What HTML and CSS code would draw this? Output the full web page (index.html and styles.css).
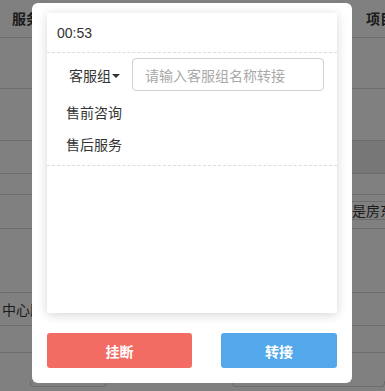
FILE: index.html
```html
<!DOCTYPE html>
<html lang="zh-CN">
<head>
<meta charset="utf-8">
<title>转接</title>
<link rel="stylesheet" href="styles.css">
</head>
<body>
<div class="page">
  <div class="bg">
    <div class="row r1"><span class="th">服务类型</span><span class="th th-right">项目</span></div>
    <div class="row r2"></div>
    <div class="row r3"></div>
    <div class="row r4"><span class="dark-cell"></span></div>
    <div class="row r5"></div>
    <div class="row r6"><span class="tag">是房东</span></div>
    <div class="row r7"></div>
    <div class="row r8"><span class="td">中心服务</span></div>
    <div class="row r9"></div>
    <div class="row r10"><span class="box box-left"></span><span class="box box-right"></span></div>
  </div>

  <div class="modal">
    <div class="card">
      <div class="card-head">00:53</div>
      <div class="search-row">
        <div class="group-select">客服组<span class="caret"></span></div>
        <input class="search-input" type="text" placeholder="请输入客服组名称转接">
      </div>
      <ul class="group-list">
        <li>售前咨询</li>
        <li>售后服务</li>
      </ul>
      <div class="card-body"></div>
    </div>
    <div class="actions">
      <button class="btn btn-hangup">挂断</button>
      <button class="btn btn-transfer">转接</button>
    </div>
  </div>
</div>
</body>
</html>
```
FILE: styles.css
```css
* { box-sizing: border-box; }
html, body { margin: 0; padding: 0; }
body {
  width: 385px;
  height: 391px;
  overflow: hidden;
  font-family: "Noto Sans CJK SC", "Liberation Sans", sans-serif;
  background: #808080;
}
.page {
  position: relative;
  width: 385px;
  height: 391px;
  overflow: hidden;
  background: #808080;
}
.bg {
  display: flex;
  flex-direction: column;
}
.row {
  display: flex;
  align-items: center;
  border-bottom: 1px solid #6c6c6c;
  flex-shrink: 0;
}
.r1 { height: 38px; justify-content: space-between; padding: 0 0 2px 12px; }
.r2 { height: 51px; }
.r3 { height: 52px; }
.r4 { height: 33px; justify-content: flex-end; }
.r5 { height: 21px; }
.r6 { height: 34px; justify-content: flex-end; align-items: flex-start; padding-top: 6px; }
.r7 { height: 64px; }
.r8 { height: 33px; padding-left: 2px; }
.r9 { height: 27px; }
.r10 { height: 33px; border-bottom: none; align-items: flex-end; }
.th {
  font-size: 14px;
  font-weight: bold;
  color: #1a1a1a;
}
.th-right { width: 19px; overflow: hidden; white-space: nowrap; }
.dark-cell {
  width: 33px;
  height: 100%;
  background: #777777;
}
.tag {
  width: 34px;
  height: 19px;
  border-top: 1px solid #6c6c6c;
  border-bottom: 1px solid #6c6c6c;
  border-left: 1px solid #6c6c6c;
  font-size: 14px;
  line-height: 17px;
  color: #1a1a1a;
  white-space: nowrap;
  overflow: hidden;
}
.td { font-size: 14px; color: #1a1a1a; white-space: nowrap; }
.box {
  height: 6px;
  border: 1px solid #6c6c6c;
  border-top: none;
  border-radius: 0 0 4px 4px;
  margin-bottom: -1px;
}
.box-left { width: 80px; margin-left: 30px; }
.box-right { width: 160px; margin-left: 125px; }

.modal {
  position: absolute;
  left: 32px;
  top: 3px;
  width: 320px;
  height: 380px;
  background: #fff;
  border-radius: 6px;
  padding: 10px 15px 15px;
  display: flex;
  flex-direction: column;
}
.card {
  width: 290px;
  height: 300px;
  background: #fff;
  box-shadow: 0 2px 10px rgba(0, 0, 0, 0.16);
  display: flex;
  flex-direction: column;
}
.card-head {
  height: 40px;
  padding: 10px 0 0 10px;
  font-size: 14px;
  line-height: 20px;
  color: #333;
  font-family: "Liberation Sans", "Noto Sans CJK SC", sans-serif;
  border-bottom: 1px dashed #dcdcdc;
}
.search-row {
  display: flex;
  align-items: center;
  margin-top: 5px;
  padding-left: 22px;
}
.group-select {
  display: flex;
  align-items: center;
  font-size: 14px;
  color: #333;
  width: 63px;
}
.caret {
  width: 0;
  height: 0;
  margin-left: 1px;
  margin-top: 2px;
  border-left: 4px solid transparent;
  border-right: 4px solid transparent;
  border-top: 4px solid #333;
}
.search-input {
  width: 192px;
  height: 33px;
  border: 1px solid #cfcfcf;
  border-radius: 4px;
  padding: 0 12px;
  font-size: 14px;
  font-family: "Noto Sans CJK SC", "Liberation Sans", sans-serif;
  color: #333;
  outline: none;
}
.search-input::placeholder { color: #a9a9a9; }
.group-list {
  list-style: none;
  margin: 5px 0 0;
  padding: 0 0 5px 19px;
  border-bottom: 1px dashed #dcdcdc;
}
.group-list li {
  height: 32px;
  line-height: 32px;
  font-size: 14px;
  color: #333;
}
.card-body { flex: 1; }
.actions {
  display: flex;
  justify-content: space-between;
  margin-top: 20px;
}
.btn {
  height: 35px;
  border: none;
  border-radius: 3px;
  color: #fff;
  font-size: 14px;
  font-weight: bold;
  font-family: "Noto Sans CJK SC", "Liberation Sans", sans-serif;
  padding: 0;
}
.btn-hangup { width: 145px; background: #f26c63; }
.btn-transfer { width: 116px; background: #52a8eb; }
```
